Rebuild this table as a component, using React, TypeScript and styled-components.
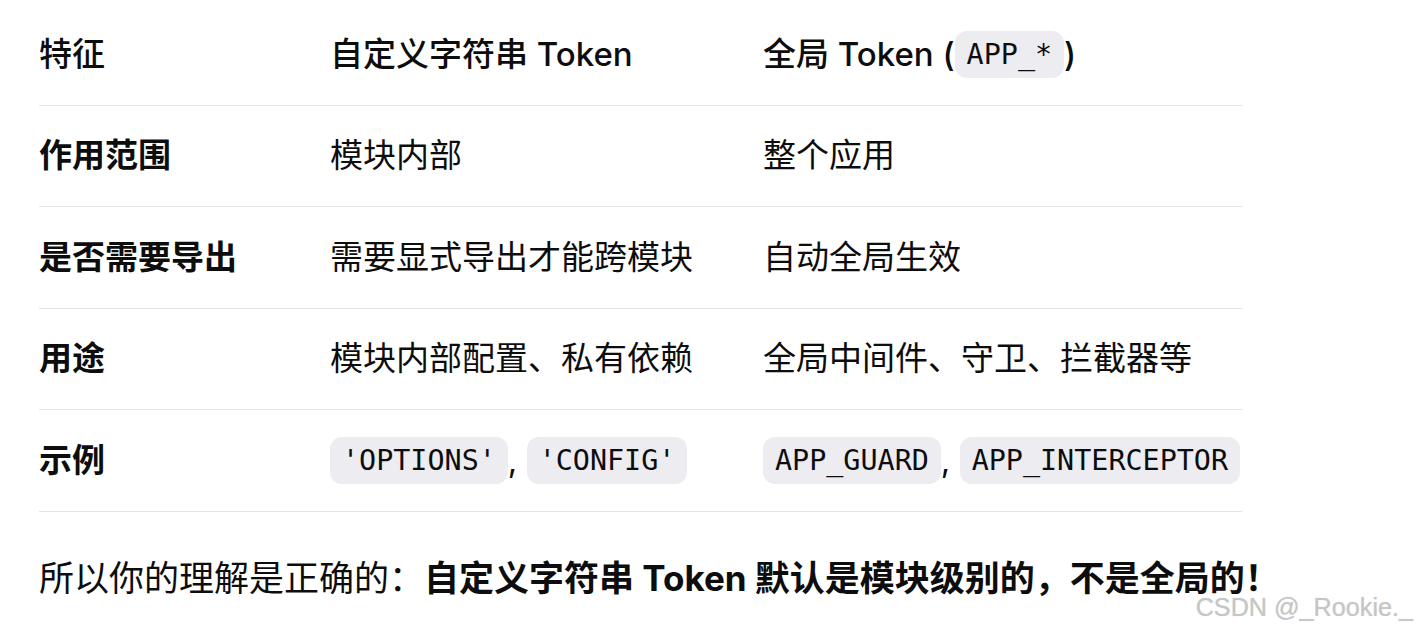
import React from "react";
import styled, { createGlobalStyle } from "styled-components";

const GlobalStyle = createGlobalStyle`
  html, body {
    margin: 0;
    padding: 0;
    background: #ffffff;
  }
  body {
    font-family: "Inter", "Noto Sans CJK SC", sans-serif;
    color: #0d0d0d;
  }
`;

const Page = styled.div`
  position: relative;
  width: 1416px;
  height: 632px;
  overflow: hidden;
  padding: 4px 0 0 39px;
  box-sizing: border-box;
`;

const Table = styled.div`
  display: flex;
  flex-direction: column;
  width: 1203px;
`;

const Row = styled.div`
  display: grid;
  grid-template-columns: 291px 433px 479px;
  align-items: center;
  height: 101.5px;
  box-sizing: border-box;
  border-bottom: 1.5px solid #e3e3e3;
`;

const Cell = styled.div<{ $head?: boolean; $strong?: boolean }>`
  font-size: 33px;
  line-height: 47px;
  font-weight: ${(p) => (p.$head ? 500 : p.$strong ? 700 : 400)};
  white-space: nowrap;
  display: flex;
  align-items: center;
`;

const Code = styled.code`
  font-family: "DejaVu Sans Mono", "Liberation Mono", monospace;
  font-size: 28.4px;
  line-height: 33px;
  padding: 7px 12px;
  border-radius: 12px;
  background: #ececf1;
  color: #0d0d0d;
`;

const Paragraph = styled.p`
  margin: 41px 0 0;
  font-size: 35px;
  line-height: 50px;
  white-space: nowrap;
`;

const Strong = styled.strong`
  font-weight: 700;
`;

const Watermark = styled.div`
  position: absolute;
  right: 3px;
  top: 593px;
  font-family: "Liberation Sans", Arial, sans-serif;
  font-size: 25.2px;
  line-height: 28px;
  color: #c6c6c6;
  text-shadow: 0 0 1px rgba(150, 150, 150, 0.4);
`;

const rows: { label: string; a: React.ReactNode; b: React.ReactNode }[] = [
  { label: "作用范围", a: "模块内部", b: "整个应用" },
  { label: "是否需要导出", a: "需要显式导出才能跨模块", b: "自动全局生效" },
  { label: "用途", a: "模块内部配置、私有依赖", b: "全局中间件、守卫、拦截器等" },
  {
    label: "示例",
    a: (
      <>
        <Code>'OPTIONS'</Code>,&nbsp;<Code>'CONFIG'</Code>
      </>
    ),
    b: (
      <>
        <Code>APP_GUARD</Code>,&nbsp;<Code>APP_INTERCEPTOR</Code>
      </>
    ),
  },
];

export default function App() {
  return (
    <>
      <GlobalStyle />
      <Page>
        <Table>
          <Row>
            <Cell $head>特征</Cell>
            <Cell $head>自定义字符串 Token</Cell>
            <Cell $head>
              全局 Token (<Code>APP_*</Code>)
            </Cell>
          </Row>
          {rows.map((r) => (
            <Row key={r.label}>
              <Cell $strong>{r.label}</Cell>
              <Cell>{r.a}</Cell>
              <Cell>{r.b}</Cell>
            </Row>
          ))}
        </Table>
        <Paragraph>
          所以你的理解是正确的：<Strong>自定义字符串 Token 默认是模块级别的，不是全局的！</Strong>
        </Paragraph>
        <Watermark>CSDN @_Rookie._</Watermark>
      </Page>
    </>
  );
}
